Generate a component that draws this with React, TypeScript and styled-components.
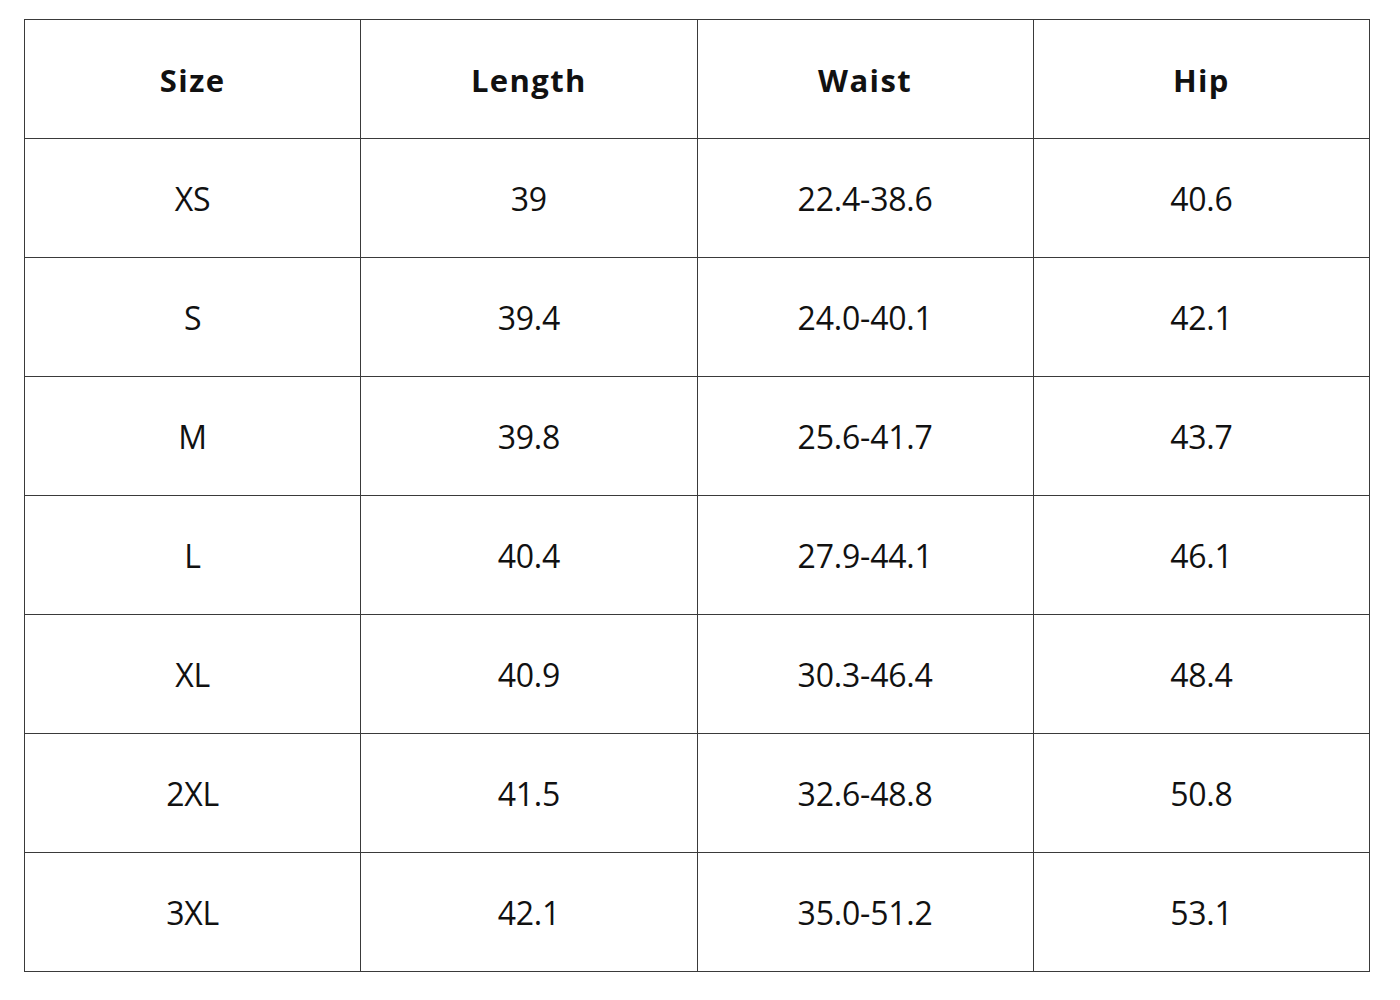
import React from "react";
import styled, { createGlobalStyle } from "styled-components";

const Global = createGlobalStyle`
  html, body { margin: 0; padding: 0; background: #ffffff; }
  body { font-family: "Open Sans", "Liberation Sans", sans-serif; color: #111; }
`;

const Page = styled.div`
  padding: 19px 0 0 24px;
`;

const Table = styled.table`
  border-collapse: collapse;
  table-layout: fixed;
  width: 1346px;
`;

const Row = styled.tr`
  height: 119px;
`;

const HeadCell = styled.th`
  border: 1px solid #3a3a3a;
  padding: 1px 0 0 0;
  text-align: center;
  vertical-align: middle;
  font-size: 31px;
  font-weight: 700;
  letter-spacing: 1.4px;
  color: #111;
`;

const Cell = styled.td`
  border: 1px solid #3a3a3a;
  padding: 0;
  text-align: center;
  vertical-align: middle;
  font-size: 32px;
  font-weight: 400;
  letter-spacing: -0.2px;
  color: #111;
`;

const headers = ["Size", "Length", "Waist", "Hip"];
const rows = [
  ["XS", "39", "22.4-38.6", "40.6"],
  ["S", "39.4", "24.0-40.1", "42.1"],
  ["M", "39.8", "25.6-41.7", "43.7"],
  ["L", "40.4", "27.9-44.1", "46.1"],
  ["XL", "40.9", "30.3-46.4", "48.4"],
  ["2XL", "41.5", "32.6-48.8", "50.8"],
  ["3XL", "42.1", "35.0-51.2", "53.1"],
];

export default function App() {
  return (
    <Page>
      <Global />
      <Table>
        <thead>
          <Row>
            {headers.map((h) => (
              <HeadCell key={h}>{h}</HeadCell>
            ))}
          </Row>
        </thead>
        <tbody>
          {rows.map((r) => (
            <Row key={r[0]}>
              {r.map((c, i) => (
                <Cell key={i}>{c}</Cell>
              ))}
            </Row>
          ))}
        </tbody>
      </Table>
    </Page>
  );
}
